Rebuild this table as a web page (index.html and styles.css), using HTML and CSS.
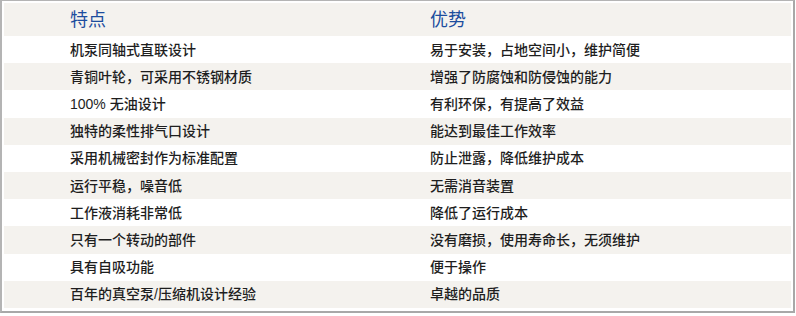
FILE: index.html
```html
<!DOCTYPE html>
<html lang="zh-CN">
<head>
<meta charset="utf-8">
<title>特点与优势</title>
<link rel="stylesheet" href="styles.css">
</head>
<body>
<div class="panel">
  <div class="row head"><div class="cell">特点</div><div class="cell">优势</div></div>
  <div class="row"><div class="cell">机泵同轴式直联设计</div><div class="cell">易于安装，占地空间小，维护简便</div></div>
  <div class="row alt"><div class="cell">青铜叶轮，可采用不锈钢材质</div><div class="cell">增强了防腐蚀和防侵蚀的能力</div></div>
  <div class="row"><div class="cell">100% 无油设计</div><div class="cell">有利环保，有提高了效益</div></div>
  <div class="row alt"><div class="cell">独特的柔性排气口设计</div><div class="cell">能达到最佳工作效率</div></div>
  <div class="row"><div class="cell">采用机械密封作为标准配置</div><div class="cell">防止泄露，降低维护成本</div></div>
  <div class="row alt"><div class="cell">运行平稳，噪音低</div><div class="cell">无需消音装置</div></div>
  <div class="row"><div class="cell">工作液消耗非常低</div><div class="cell">降低了运行成本</div></div>
  <div class="row alt"><div class="cell">只有一个转动的部件</div><div class="cell">没有磨损，使用寿命长，无须维护</div></div>
  <div class="row"><div class="cell">具有自吸功能</div><div class="cell">便于操作</div></div>
  <div class="row alt"><div class="cell">百年的真空泵/压缩机设计经验</div><div class="cell">卓越的品质</div></div>
</div>
</body>
</html>
```

FILE: styles.css
```css
html, body {
  margin: 0;
  padding: 0;
  background: #ffffff;
}
body {
  font-family: "Liberation Sans", "Noto Sans CJK SC", sans-serif;
  color: #1e1e1e;
}
.panel {
  width: 787px;
  padding: 2px 2px 3px 2px;
  border-top: 1px solid #b4b4b4;
  border-left: 2px solid #b4b4b4;
  border-right: 2px solid #a8a8a8;
  border-bottom: 2px solid #a8a8a8;
  box-sizing: content-box;
  display: flex;
  flex-direction: column;
}
.row {
  display: grid;
  grid-template-columns: 360px 1fr;
  align-items: center;
  height: 27.2px;
  padding-left: 66px;
  font-size: 14px;
  font-weight: 500;
  background: #ffffff;
}
.row.alt,
.row.head {
  background: #f4f2ee;
}
.row.head {
  height: 33px;
  font-size: 18px;
  font-weight: 400;
  color: #1c4d9e;
}
.cell {
  white-space: nowrap;
  line-height: 1;
}
```
